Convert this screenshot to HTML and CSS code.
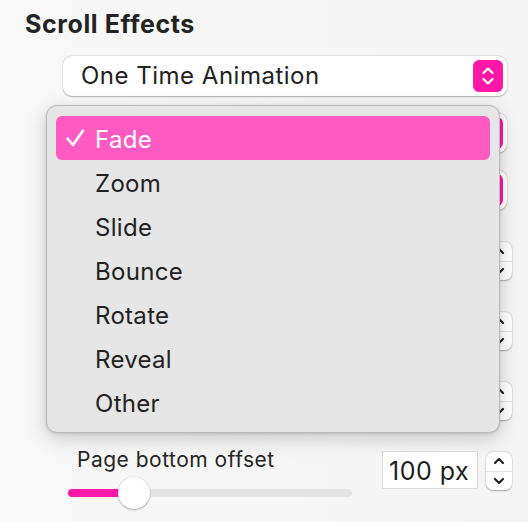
FILE: index.html
```html
<!DOCTYPE html>
<html>
<head>
<meta charset="utf-8">
<link rel="stylesheet" href="styles.css">
</head>
<body>
<div class="panel">
  <h2 class="title">Scroll Effects</h2>

  <div class="popup">
    <span class="popup-label">One Time Animation</span>
    <span class="popup-arrows">
      <svg width="14" height="22" viewBox="0 0 14 22"><path d="M2.5 8 L7 3.5 L11.5 8 M2.5 14 L7 18.5 L11.5 14" fill="none" stroke="#fff" stroke-width="2.2" stroke-linecap="round" stroke-linejoin="round"/></svg>
    </span>
  </div>
  <div class="popup">
    <span class="popup-label"></span>
    <span class="popup-arrows"></span>
  </div>
  <div class="popup">
    <span class="popup-label"></span>
    <span class="popup-arrows"></span>
  </div>

  <div class="groups">
    <div class="group">
      <div class="group-main">
        <div class="group-label"></div>
        <div class="slider"><div class="track"><div class="fill" style="width:20px"></div></div></div>
      </div>
      <div class="field"></div>
      <div class="stepper"><span class="step up"><svg width="12" height="8" viewBox="0 0 12 8"><path d="M2 6 L6 2 L10 6" fill="none" stroke="#222" stroke-width="2.2" stroke-linecap="round" stroke-linejoin="round"/></svg></span><span class="step down"><svg width="12" height="8" viewBox="0 0 12 8"><path d="M2 2 L6 6 L10 2" fill="none" stroke="#222" stroke-width="2.2" stroke-linecap="round" stroke-linejoin="round"/></svg></span></div>
    </div>
    <div class="group">
      <div class="group-main">
        <div class="group-label"></div>
        <div class="slider"><div class="track"><div class="fill" style="width:20px"></div></div></div>
      </div>
      <div class="field"></div>
      <div class="stepper"><span class="step up"><svg width="12" height="8" viewBox="0 0 12 8"><path d="M2 6 L6 2 L10 6" fill="none" stroke="#222" stroke-width="2.2" stroke-linecap="round" stroke-linejoin="round"/></svg></span><span class="step down"><svg width="12" height="8" viewBox="0 0 12 8"><path d="M2 2 L6 6 L10 2" fill="none" stroke="#222" stroke-width="2.2" stroke-linecap="round" stroke-linejoin="round"/></svg></span></div>
    </div>
    <div class="group">
      <div class="group-main">
        <div class="group-label"></div>
        <div class="slider"><div class="track"><div class="fill" style="width:20px"></div></div></div>
      </div>
      <div class="field"></div>
      <div class="stepper"><span class="step up"><svg width="12" height="8" viewBox="0 0 12 8"><path d="M2 6 L6 2 L10 6" fill="none" stroke="#222" stroke-width="2.2" stroke-linecap="round" stroke-linejoin="round"/></svg></span><span class="step down"><svg width="12" height="8" viewBox="0 0 12 8"><path d="M2 2 L6 6 L10 2" fill="none" stroke="#222" stroke-width="2.2" stroke-linecap="round" stroke-linejoin="round"/></svg></span></div>
    </div>
    <div class="group">
      <div class="group-main">
        <div class="group-label">Page bottom offset</div>
        <div class="slider"><div class="track"><div class="fill" style="width:66px"></div></div><div class="knob" style="left:50px"></div></div>
      </div>
      <div class="field">100 px</div>
      <div class="stepper"><span class="step up"><svg width="12" height="8" viewBox="0 0 12 8"><path d="M2 6 L6 2 L10 6" fill="none" stroke="#222" stroke-width="2.2" stroke-linecap="round" stroke-linejoin="round"/></svg></span><span class="step down"><svg width="12" height="8" viewBox="0 0 12 8"><path d="M2 2 L6 6 L10 2" fill="none" stroke="#222" stroke-width="2.2" stroke-linecap="round" stroke-linejoin="round"/></svg></span></div>
    </div>
  </div>

  <div class="menu">
    <div class="menu-item selected">
      <svg class="check" width="20" height="20" viewBox="0 0 20 20"><path d="M2.5 10.5 L8 17 L18 2.5" fill="none" stroke="#fff" stroke-width="2.6" stroke-linecap="round" stroke-linejoin="round"/></svg>
      Fade
    </div>
    <div class="menu-item">Zoom</div>
    <div class="menu-item">Slide</div>
    <div class="menu-item">Bounce</div>
    <div class="menu-item">Rotate</div>
    <div class="menu-item">Reveal</div>
    <div class="menu-item">Other</div>
  </div>
</div>
</body>
</html>
```

FILE: styles.css
```css
* { box-sizing: border-box; }
html, body {
  margin: 0;
  padding: 0;
}
body {
  width: 528px;
  height: 522px;
  overflow: hidden;
  background: linear-gradient(90deg, #f8f8f8 0%, #f4f4f4 100%);
  font-family: Inter, "Liberation Sans", sans-serif;
  color: #222;
}
.panel {
  position: relative;
  height: 522px;
  display: flex;
  flex-direction: column;
}
.title {
  margin: 9px 0 0 25px;
  font-size: 25px;
  line-height: 30px;
  font-weight: 700;
  color: #232323;
  letter-spacing: 0.6px;
}
.popup {
  margin: 16px 0 0 63px;
  width: 444px;
  height: 40px;
  background: #fff;
  border-radius: 9px;
  box-shadow: 0 0.5px 1.5px rgba(0,0,0,0.28), 0 0 0 0.5px rgba(0,0,0,0.06);
  display: flex;
  align-items: center;
  padding: 0 4px 0 18px;
}
.title + .popup { margin-top: 17px; }
.popup + .popup { margin-top: 17px; }
.popup-label {
  flex: 1;
  font-size: 24px;
  letter-spacing: 0.5px;
  color: #222;
  line-height: 28px;
  margin-top: -1px;
}
.popup-arrows {
  width: 30px;
  height: 32px;
  border-radius: 6px;
  background: #ff17a8;
  display: flex;
  align-items: center;
  justify-content: center;
}
.groups {
  margin-top: 26px;
  display: flex;
  flex-direction: column;
}
.group {
  height: 70px;
  display: flex;
  align-items: flex-start;
}
.group-main {
  margin-left: 68px;
  width: 284px;
  display: flex;
  flex-direction: column;
}
.group-label {
  height: 24px;
  line-height: 24px;
  margin-top: 2px;
  padding-left: 9px;
  font-size: 21px;
  letter-spacing: 0.5px;
  color: #262626;
}
.slider {
  position: relative;
  margin-top: 5px;
  height: 32px;
}
.track {
  position: absolute;
  left: 0;
  right: 0;
  top: 12px;
  height: 8px;
  border-radius: 4px;
  background: #e4e4e4;
  overflow: hidden;
}
.fill {
  height: 100%;
  background: #ff17a8;
}
.knob {
  position: absolute;
  top: 0;
  width: 32px;
  height: 32px;
  border-radius: 50%;
  background: #fff;
  box-shadow: 0 1px 2px rgba(0,0,0,0.3), 0 0 0 0.5px rgba(0,0,0,0.08);
}
.field {
  margin: 5px 0 0 30px;
  width: 96px;
  height: 38px;
  background: #fff;
  border: 1px solid #dcdcdc;
  font-size: 25px;
  letter-spacing: 0.5px;
  line-height: 38px;
  padding-left: 6px;
  color: #1e1e1e;
}
.stepper {
  margin: 6px 0 0 8px;
  width: 26px;
  height: 38px;
  background: #fff;
  border-radius: 7px;
  box-shadow: 0 0.5px 1.5px rgba(0,0,0,0.3), 0 0 0 0.5px rgba(0,0,0,0.06);
  display: flex;
  flex-direction: column;
}
.step {
  flex: 1;
  display: flex;
  align-items: center;
  justify-content: center;
}
.step.up { border-bottom: 1px solid #e2e2e2; }
.menu {
  position: absolute;
  left: 46px;
  top: 105px;
  width: 454px;
  height: 328px;
  background: #e6e6e6;
  border: 1px solid #b9b9b9;
  border-radius: 11px;
  box-shadow: 0 6px 20px rgba(0,0,0,0.18), 0 1px 3px rgba(0,0,0,0.12);
  padding: 10px 9px 0 9px;
}
.menu-item {
  position: relative;
  height: 44px;
  line-height: 47px;
  padding-left: 39px;
  font-size: 24px;
  letter-spacing: 0.3px;
  color: #222;
  border-radius: 6px;
}
.menu-item.selected {
  background: #ff5ac2;
  color: #fff;
}
.check {
  position: absolute;
  left: 9px;
  top: 12px;
}
```
